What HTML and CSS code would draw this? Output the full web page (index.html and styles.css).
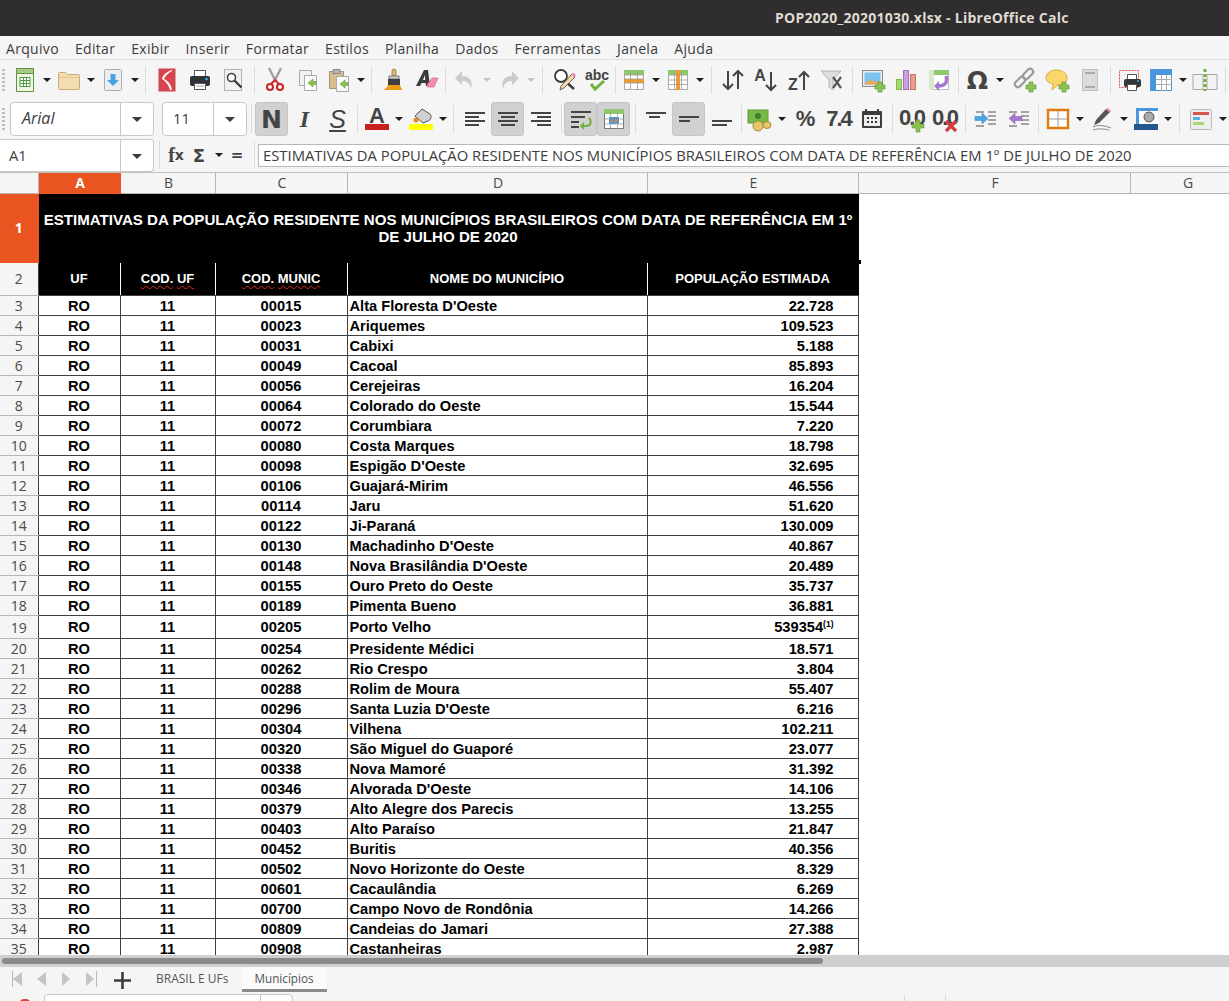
FILE: index.html
```html
<!DOCTYPE html>
<html lang="pt-BR">
<head>
<meta charset="utf-8">
<title>POP2020_20201030.xlsx - LibreOffice Calc</title>
<link rel="stylesheet" href="styles.css">
</head>
<body>
<header class="titlebar">POP2020_20201030.xlsx - LibreOffice Calc</header>
<nav class="menubar"><span>Arquivo</span><span>Editar</span><span>Exibir</span><span>Inserir</span><span>Formatar</span><span>Estilos</span><span>Planilha</span><span>Dados</span><span>Ferramentas</span><span>Janela</span><span>Ajuda</span></nav>

<div class="toolbar tb1">
<i class="grip"></i>
<span class="btn"><svg viewBox="0 0 24 24"><path d="M3.500.5h17v23h-17z" fill="#f0f4e6" stroke="#5f9440"/><path d="M3.500.5h17v5h-17z" fill="#a6c98a" stroke="#5f9440"/><path d="M7 9.500h10v9H7z" fill="#fff" stroke="#4f9a45"/><path d="M7 12.500h10M7 15.500h10M10.500 9.500v9M13.500 9.500v9" stroke="#4f9a45"/></svg></span><i class="arr"></i>
<span class="btn"><svg viewBox="0 0 24 24"><path d="M1.500 5.500a1 1 0 0 1 1-1h6l2 2h11a1 1 0 0 1 1 1v13a1 1 0 0 1-1 1h-19a1 1 0 0 1-1-1z" fill="#f3dcb0" stroke="#c9ab78"/><path d="M1.500 9.500h21" stroke="#e3c793"/></svg></span><i class="arr"></i>
<span class="btn"><svg viewBox="0 0 24 24"><rect x="3.500" y="1.500" width="17" height="21" rx="1" fill="#eceff2" stroke="#adadad"/><path d="M9.500 6h5v6H18l-6 6-6-6h3.500z" fill="#4ba3e3"/></svg></span><i class="arr"></i>
<i class="sep w10"></i>
<span class="btn"><svg viewBox="0 0 24 24"><rect x="4" y="1" width="16" height="22" fill="#d8434f" stroke="#c94a50"/><path d="M17 2c-6 2-9 5-10 9 3 2 7 6 8 11h2c-1-6-4-9-8-11 1-3 4-6 8-8z" fill="#fff"/></svg></span>
<span class="btn"><svg viewBox="0 0 24 24"><path d="M6.500 2.500h11v6h-11z" fill="#fff" stroke="#555"/><rect x="2" y="8" width="20" height="10" rx="2" fill="#2f3338"/><circle cx="18.500" cy="11" r="1.300" fill="#35b5e5"/><path d="M6.500 15.500h11v6h-11z" fill="#fff" stroke="#555"/><path d="M8 18h8" stroke="#aaa"/></svg></span>
<span class="btn"><svg viewBox="0 0 24 24"><rect x="3.500" y="1.500" width="17" height="21" fill="#f1f1f1" stroke="#b2b2b2"/><circle cx="10.500" cy="9.500" r="4" fill="#fff" stroke="#444" stroke-width="1.600"/><path d="M13.500 12.500l7 7" stroke="#333" stroke-width="2.200"/></svg></span>
<i class="sep w9"></i>
<span class="btn"><svg viewBox="0 0 24 24"><path d="M6 0l7 14M18 0l-7 14" stroke="#a0a0a0" stroke-width="2.400"/><circle cx="7" cy="19" r="3" fill="#fff" stroke="#c92a2a" stroke-width="2.200"/><circle cx="17" cy="19" r="3" fill="#fff" stroke="#c92a2a" stroke-width="2.200"/><path d="M8 16l4-4 4 4" fill="none" stroke="#c92a2a" stroke-width="2"/></svg></span>
<span class="btn"><svg viewBox="0 0 24 24"><path d="M3.500 2.500h12v15h-12z" fill="#f1f1f1" stroke="#aaa"/><path d="M8.500 7.500h12v15h-12z" fill="#fafafa" stroke="#aaa"/><path d="M17 11l-5 4 5 4v-2.500h3v-3h-3z" fill="#8cc152" stroke="#5f9c3a" stroke-width=".6"/></svg></span>
<span class="btn tight"><svg viewBox="0 0 24 24"><path d="M2.500 3.500h14v17h-14z" fill="#d8bd8e" stroke="#a8946f"/><path d="M6 1.500h7v4H6z" fill="#b5b5b5" stroke="#888"/><path d="M9.500 8.500h12v15h-12z" fill="#fafafa" stroke="#aaa"/><path d="M18 12l-5 4 5 4v-2.500h3v-3h-3z" fill="#8cc152" stroke="#5f9c3a" stroke-width=".6"/></svg></span><i class="arr"></i>
<i class="sep w10"></i>
<span class="btn"><svg viewBox="0 0 24 24"><path d="M13 1a2 2 0 0 1 2 2v5h-4V3a2 2 0 0 1 2-2z" fill="#d9b67a" stroke="#a5874f"/><path d="M8 8h10v3H8z" fill="#d0d0d0" stroke="#777"/><path d="M7 11h12v6H7z" fill="#3f3f3f"/><path d="M7 17h12c1 3 2 5 3 5H2c3-1 4-3 5-5z" fill="#f09a1a"/></svg></span>
<span class="btn"><svg viewBox="0 0 24 24"><path d="M2 18L10 2h4l2 16h-4l-.4-3H7.600L6 18zM9 12h2.300l-.5-5z" fill="#3b3b3b"/><path d="M13 17l5-7h6l-4 9h-7z" fill="#f28bb0" stroke="#d86b94" stroke-width=".7"/></svg></span>
<i class="sep w6"></i>
<span class="btn"><svg viewBox="0 0 24 24"><path d="M9 3L2 10l7 7v-4c5 0 8 2 9 8 2-8-1-13-9-13z" fill="#cbcbcb"/></svg></span><i class="arr off"></i>
<span class="btn"><svg viewBox="0 0 24 24"><path d="M15 3l7 7-7 7v-4c-5 0-8 2-9 8-2-8 1-13 9-13z" fill="#cbcbcb"/></svg></span><i class="arr off"></i>
<i class="sep w11"></i>
<span class="btn"><svg viewBox="0 0 24 24"><circle cx="9" cy="8" r="6" fill="#fff" stroke="#3c3c3c" stroke-width="1.800"/><path d="M13 13l9 8" stroke="#3c3c3c" stroke-width="2.400"/><path d="M20 6l3 3-11 11-4 2 1-4z" fill="#f3d9a6" stroke="#444" stroke-width=".8"/><path d="M19.500 6.500l2-2 2.500 2.500-2 2z" fill="#ec88b0"/></svg></span>
<span class="btn"><svg viewBox="0 0 24 24"><text x="12" y="12" class="abc">abc</text><path d="M6 16l4 5 9-8" fill="none" stroke="#6fb240" stroke-width="3"/></svg></span>
<i class="sep w4"></i>
<span class="btn"><svg viewBox="0 0 24 24"><path d="M2.500 2.500h19v19h-19z" fill="#fff" stroke="#aaa"/><path d="M2 2h20v5H2z" fill="#8dc96a"/><path d="M2 11h20v4H2z" fill="#f39c2c"/><path d="M2.500 11h19M2.500 15h19M2.500 7h19M8.500 2.500v19M15.500 2.500v19" stroke="#999" stroke-width=".8"/></svg></span><i class="arr"></i>
<span class="btn"><svg viewBox="0 0 24 24"><path d="M2.500 2.500h19v19h-19z" fill="#fff" stroke="#aaa"/><path d="M2 2h20v5H2z" fill="#8dc96a"/><path d="M10 2h4v20h-4z" fill="#f39c2c"/><path d="M2.500 12h19M2.500 16.500h19M2.500 7h19M8.500 2.500v19M15.500 2.500v19" stroke="#999" stroke-width=".8"/></svg></span><i class="arr"></i>
<i class="sep w11"></i>
<span class="btn"><svg viewBox="0 0 24 24"><path d="M7 3v18M2 16l5 5 5-5M17 21V3M12 8l5-5 5 5" fill="none" stroke="#444" stroke-width="2"/></svg></span>
<span class="btn"><svg viewBox="0 0 24 24"><text x="6" y="13" class="sorttxt">A</text><path d="M17 4v18M12 17l5 5 5-5" fill="none" stroke="#444" stroke-width="2"/></svg></span>
<span class="btn"><svg viewBox="0 0 24 24"><text x="6" y="22" class="sorttxt">Z</text><path d="M17 22V4M12 9l5-5 5 5" fill="none" stroke="#444" stroke-width="2"/></svg></span>
<span class="btn"><svg viewBox="0 0 24 24"><path d="M1 3h20l-8 9v10l-4-3v-7z" fill="#ddd" stroke="#b5b5b5"/><path d="M13 9l8 11M21 9l-8 11" stroke="#555" stroke-width="2.200"/></svg></span>
<i class="sep w8"></i>
<span class="btn"><svg viewBox="0 0 24 24"><rect x="1.500" y="2.500" width="20" height="16" fill="#eee" stroke="#888"/><rect x="3.500" y="4.500" width="16" height="12" fill="#7cc3ee"/><path d="M3.500 16.500l5-5 4 3 3-2 4 4z" fill="#f1a24c"/><path d="M14 17h3v-3h4v3h3v4h-3v3h-4v-3h-3z" fill="#8cc152" stroke="#5f9c3a" stroke-width=".7"/></svg></span>
<span class="btn"><svg viewBox="0 0 24 24"><rect x="2.500" y="11.500" width="5" height="10" fill="#a9d671" stroke="#85b750"/><rect x="9.500" y="2.500" width="5" height="19" fill="#c8a0e0" stroke="#9f74bd"/><rect x="16.500" y="6.500" width="5" height="15" fill="#ec9c8c" stroke="#c87566"/></svg></span>
<span class="btn"><svg viewBox="0 0 24 24"><path d="M2.500 2.500h19v19h-19z" fill="#fff" stroke="#bbb"/><path d="M2 2h20v5H2z" fill="#8dc96a"/><path d="M2 2h5v20H2z" fill="#d9e8c8"/><path d="M19 8c2 6-1 10-7 10" fill="none" stroke="#a678d0" stroke-width="3.500"/><path d="M12 13l-5 5 5 5z" fill="#a678d0"/></svg></span>
<i class="sep w6"></i>
<span class="btn glyph omega">Ω</span><i class="arr"></i>
<i class="sep w2"></i>
<span class="btn"><svg viewBox="0 0 24 24"><rect x="13" y="0" width="6" height="12" rx="3" transform="rotate(45 16 6)" fill="none" stroke="#9a9a9a" stroke-width="2.200"/><rect x="5" y="8" width="6" height="12" rx="3" transform="rotate(45 8 14)" fill="none" stroke="#9a9a9a" stroke-width="2.200"/><path d="M14 17h3v-3h4v3h3v4h-3v3h-4v-3h-3z" fill="#8cc152" stroke="#5f9c3a" stroke-width=".7"/></svg></span>
<span class="btn"><svg viewBox="0 0 24 24"><path d="M11 2c6 0 11 3 11 8s-4 7-9 7l-6 5 1-6c-4-1-7-3-7-6 0-5 5-8 10-8z" fill="#fbd66a" stroke="#dcae3c"/><path d="M14 17h3v-3h4v3h3v4h-3v3h-4v-3h-3z" fill="#8cc152" stroke="#5f9c3a" stroke-width=".7"/></svg></span>
<span class="btn"><svg viewBox="0 0 24 24"><rect x="4.500" y="1.500" width="15" height="21" fill="#dcdcdc" stroke="#c0c0c0"/><path d="M7 5h10M7 19h10" stroke="#aaa" stroke-width="2"/></svg></span>
<i class="sep w7"></i>
<span class="btn"><svg viewBox="0 0 24 24"><path d="M1.500 2.500h19v17h-19z" fill="#f3f3f3" stroke="#d9534f" stroke-dasharray="2 1"/><path d="M9.500 6.500h9v5h-9z" fill="#fff" stroke="#555"/><rect x="6" y="11" width="17" height="8" rx="2" fill="#33373c"/><circle cx="20" cy="13" r="1" fill="#35b5e5"/><path d="M9.500 16.500h9v6h-9z" fill="#fff" stroke="#555"/></svg></span>
<span class="btn tight"><svg viewBox="0 0 24 24"><path d="M1.500 1.500h21v21h-21z" fill="#fff" stroke="#5b8ecb"/><path d="M1 1h22v6H1z" fill="#4b95dd"/><path d="M1 1h6v22H1z" fill="#4b95dd"/><path d="M7 11.500h16M7 16.500h16M12.500 7v16M17.500 7v16" stroke="#aaa"/></svg></span><i class="arr"></i>
<span class="btn"><svg viewBox="0 0 24 24"><path d="M0 6.500h10v15H0zM14 6.500h10v15H14z" fill="#f3f3f3" stroke="#a8a8a8"/><path d="M12 1v3M12 6v3M12 11v3M12 16v3M12 21v2" stroke="#6eb03c" stroke-width="3"/></svg></span>
<i class="sep w7"></i>
</div>

<div class="toolbar tb2">
<i class="grip"></i>
<div class="combo fontname"><span class="val">Arial</span><b class="drop"></b></div>
<div class="combo fontsize"><span class="val">11</span><b class="drop"></b></div>
<i class="sep w8"></i>
<span class="btn on glyph bold">N</span>
<span class="btn glyph ital">I</span>
<span class="btn glyph shad">S</span>
<i class="sep w6"></i>
<span class="btn"><svg viewBox="0 0 24 24"><text x="12" y="16" class="colorA">A</text><rect y="17" width="24" height="6" fill="#c9211e"/></svg></span><i class="arr"></i>
<span class="btn"><svg viewBox="0 0 24 24"><path d="M6 9l7-7 8 5c2 2 1 6-2 7l-5 2z" fill="#d0d0d0" stroke="#555"/><circle cx="7" cy="13" r="2.500" fill="#f2841e"/><rect y="17" width="24" height="6" fill="#ffff00"/></svg></span><i class="arr"></i>
<i class="sep w10"></i>
<span class="btn"><svg viewBox="0 0 24 24"><path d="M2 6h20M2 10h14M2 14h20M2 18h14" stroke="#444" stroke-width="2"/></svg></span>
<span class="btn on"><svg viewBox="0 0 24 24"><path d="M2 6h20M5 10h14M2 14h20M5 18h14" stroke="#444" stroke-width="2"/></svg></span>
<span class="btn"><svg viewBox="0 0 24 24"><path d="M2 6h20M8 10h14M2 14h20M8 18h14" stroke="#444" stroke-width="2"/></svg></span>
<i class="sep w7"></i>
<span class="btn on"><svg viewBox="0 0 24 24"><path d="M2 5h20M2 10h14M2 15h8M2 20h8" stroke="#444" stroke-width="2"/><path d="M20 11c3 3 2 8-3 8h-3" fill="none" stroke="#6fb240" stroke-width="2"/><path d="M15 15l-4 4 4 4z" fill="#6fb240"/></svg></span>
<span class="btn on"><svg viewBox="0 0 24 24"><path d="M2.500 2.500h19v19h-19z" fill="#fff" stroke="#777"/><path d="M2 2h20v5H2z" fill="#8dc96a"/><path d="M7 10h10v7H7z" fill="#4b95dd"/><path d="M8 13.500l3-2.500v5zM16 13.500l-3-2.500v5z" fill="#f2841e"/><path d="M2.500 12h4M17.500 12h4M8.500 2.500v7M15.500 2.500v7M8.500 17.500v4M15.500 17.500v4M2.500 17h19" stroke="#999" stroke-width=".8"/></svg></span>
<i class="sep w9"></i>
<span class="btn"><svg viewBox="0 0 24 24"><path d="M2 6h20M5 10h11" stroke="#444" stroke-width="2"/></svg></span>
<span class="btn on"><svg viewBox="0 0 24 24"><path d="M2 10h20M2 14h11" stroke="#444" stroke-width="2"/></svg></span>
<span class="btn"><svg viewBox="0 0 24 24"><path d="M2 14h20M2 18h15" stroke="#444" stroke-width="2"/></svg></span>
<i class="sep w5"></i>
<span class="btn"><svg viewBox="0 0 24 24"><rect x="0" y="3" width="20" height="13" fill="#76b947" stroke="#5f9c3a"/><circle cx="10" cy="9" r="3" fill="#3f7d2a"/><ellipse cx="10" cy="19" rx="5" ry="5" fill="#e6c76a" stroke="#a8883a"/><ellipse cx="19" cy="18" rx="4" ry="3.500" fill="#e6c76a" stroke="#a8883a"/></svg></span><i class="arr"></i>
<i class="sep w2"></i>
<span class="btn glyph pct">%</span>
<span class="btn glyph num">7.4</span>
<span class="btn"><svg viewBox="0 0 24 24"><path d="M3 4h18a1 1 0 0 1 1 1v15a1 1 0 0 1-1 1H3a1 1 0 0 1-1-1V5a1 1 0 0 1 1-1z" fill="#3c3c3c"/><rect x="4" y="8" width="16" height="11" fill="#eee"/><path d="M6 2v3M18 2v3" stroke="#3c3c3c" stroke-width="2"/><path d="M7 11h2M11 11h2M15 11h2M7 15h2M11 15h2M15 15h2" stroke="#3c3c3c" stroke-width="2"/></svg></span>
<i class="sep w7"></i>
<span class="btn"><span class="glyph dec">0.0</span><svg class="mini" viewBox="0 0 12 12"><path d="M4 0h4v4h4v4H8v4H4V8H0V4h4z" fill="#8cc152" stroke="#5f9c3a" stroke-width=".6"/></svg></span>
<span class="btn"><span class="glyph dec">0.0</span><svg class="mini" viewBox="0 0 12 12"><path d="M1 1l10 10M11 1L1 11" stroke="#d33f3f" stroke-width="3.200"/></svg></span>
<i class="sep w8"></i>
<span class="btn"><svg viewBox="0 0 24 24"><path d="M14 5h8M14 9h8M14 13h8M14 17h8M2 5h8M2 19h8" stroke="#888" stroke-width="1.500"/><path d="M1 9.500h7V6l6 5.500-6 5.500v-3.500H1z" fill="#4ba3e3" stroke="#2f85c4" stroke-width=".5"/></svg></span>
<span class="btn"><svg viewBox="0 0 24 24"><path d="M14 5h8M14 9h8M14 13h8M14 17h8M2 5h8M2 19h8" stroke="#888" stroke-width="1.500"/><path d="M15 9.500H8V6l-6 5.500L8 17v-3.500h7z" fill="#a678d0" stroke="#8657b0" stroke-width=".5"/></svg></span>
<i class="sep w6"></i>
<span class="btn"><svg viewBox="0 0 24 24"><path d="M2 3h20v18H2z" fill="#fff" stroke="#e07b10" stroke-width="2.400"/><path d="M12 4v16M3 12h18" stroke="#999"/></svg></span><i class="arr"></i>
<span class="btn"><svg viewBox="0 0 24 24"><path d="M16 2l4 3L9 16l-5 2 2-5z" fill="#555"/><path d="M16 2l2-1 3 3-1 2z" fill="#ec88b0"/><path d="M3 20c6-3 12-1 18 1M3 23c6-2 11-1 16 0" stroke="#888" fill="none"/></svg></span><i class="arr"></i>
<span class="btn"><svg viewBox="0 0 24 24"><path d="M2 1h22v3H2zM2 4h3v13H2z" fill="#4b95dd"/><rect x="5" y="4" width="19" height="13" fill="#fff"/><circle cx="15" cy="10" r="5" fill="#aaa" stroke="#555"/><rect y="17" width="24" height="6" fill="#23588e"/></svg></span><i class="arr"></i>
<i class="sep w11"></i>
<span class="btn condb"><svg viewBox="0 0 24 24"><rect x="1.500" y="2.500" width="21" height="20" rx="1" fill="#eee" stroke="#bbb"/><path d="M4 5h16v3H4z" fill="#d9534f"/><path d="M4 10h7v3H4z" fill="#5ab0e8"/><path d="M4 15h11v3H4z" fill="#a9d671"/></svg></span><i class="arr"></i>
</div>

<div class="formulabar">
<div class="combo namebox"><span class="val">A1</span><b class="drop"></b></div>
<i class="sep w10"></i>
<span class="fbtn glyph fx">f<small>x</small></span>
<span class="fbtn glyph sigma">Σ</span><i class="arr"></i>
<span class="fbtn glyph equal">=</span>
<i class="sep w8"></i>
<div class="finput">ESTIMATIVAS DA POPULAÇÃO RESIDENTE NOS MUNICÍPIOS BRASILEIROS COM DATA DE REFERÊNCIA EM 1º DE JULHO DE 2020</div>
</div>

<main class="sheet">
<table class="grid">
<colgroup><col class="c0"><col class="c1"><col class="c2"><col class="c3"><col class="c4"><col class="c5"><col class="c6"><col class="c7"></colgroup>
<thead><tr class="colhead"><th class="sel"></th><th class="sel">A</th><th>B</th><th>C</th><th>D</th><th>E</th><th>F</th><th>G</th></tr></thead>
<tbody>
<tr class="r1"><th class="sel">1</th><td colspan="5" class="title">ESTIMATIVAS DA POPULAÇÃO RESIDENTE NOS MUNICÍPIOS BRASILEIROS COM DATA DE REFERÊNCIA EM 1º DE JULHO DE 2020</td></tr>
<tr class="r2"><th>2</th><td>UF</td><td><u>COD.</u> <u>UF</u></td><td><u>COD.</u> <u>MUNIC</u></td><td>NOME DO MUNICÍPIO</td><td class="popcol">POPULAÇÃO ESTIMADA</td></tr>
<tr><th>3</th><td>RO</td><td>11</td><td>00015</td><td>Alta Floresta D'Oeste</td><td>22.728</td></tr>
<tr><th>4</th><td>RO</td><td>11</td><td>00023</td><td>Ariquemes</td><td>109.523</td></tr>
<tr><th>5</th><td>RO</td><td>11</td><td>00031</td><td>Cabixi</td><td>5.188</td></tr>
<tr><th>6</th><td>RO</td><td>11</td><td>00049</td><td>Cacoal</td><td>85.893</td></tr>
<tr><th>7</th><td>RO</td><td>11</td><td>00056</td><td>Cerejeiras</td><td>16.204</td></tr>
<tr><th>8</th><td>RO</td><td>11</td><td>00064</td><td>Colorado do Oeste</td><td>15.544</td></tr>
<tr><th>9</th><td>RO</td><td>11</td><td>00072</td><td>Corumbiara</td><td>7.220</td></tr>
<tr><th>10</th><td>RO</td><td>11</td><td>00080</td><td>Costa Marques</td><td>18.798</td></tr>
<tr><th>11</th><td>RO</td><td>11</td><td>00098</td><td>Espigão D'Oeste</td><td>32.695</td></tr>
<tr><th>12</th><td>RO</td><td>11</td><td>00106</td><td>Guajará-Mirim</td><td>46.556</td></tr>
<tr><th>13</th><td>RO</td><td>11</td><td>00114</td><td>Jaru</td><td>51.620</td></tr>
<tr><th>14</th><td>RO</td><td>11</td><td>00122</td><td>Ji-Paraná</td><td>130.009</td></tr>
<tr><th>15</th><td>RO</td><td>11</td><td>00130</td><td>Machadinho D'Oeste</td><td>40.867</td></tr>
<tr><th>16</th><td>RO</td><td>11</td><td>00148</td><td>Nova Brasilândia D'Oeste</td><td>20.489</td></tr>
<tr><th>17</th><td>RO</td><td>11</td><td>00155</td><td>Ouro Preto do Oeste</td><td>35.737</td></tr>
<tr><th>18</th><td>RO</td><td>11</td><td>00189</td><td>Pimenta Bueno</td><td>36.881</td></tr>
<tr class="r19"><th>19</th><td>RO</td><td>11</td><td>00205</td><td>Porto Velho</td><td>539354<sup>(1)</sup></td></tr>
<tr><th>20</th><td>RO</td><td>11</td><td>00254</td><td>Presidente Médici</td><td>18.571</td></tr>
<tr><th>21</th><td>RO</td><td>11</td><td>00262</td><td>Rio Crespo</td><td>3.804</td></tr>
<tr><th>22</th><td>RO</td><td>11</td><td>00288</td><td>Rolim de Moura</td><td>55.407</td></tr>
<tr><th>23</th><td>RO</td><td>11</td><td>00296</td><td>Santa Luzia D'Oeste</td><td>6.216</td></tr>
<tr><th>24</th><td>RO</td><td>11</td><td>00304</td><td>Vilhena</td><td>102.211</td></tr>
<tr><th>25</th><td>RO</td><td>11</td><td>00320</td><td>São Miguel do Guaporé</td><td>23.077</td></tr>
<tr><th>26</th><td>RO</td><td>11</td><td>00338</td><td>Nova Mamoré</td><td>31.392</td></tr>
<tr><th>27</th><td>RO</td><td>11</td><td>00346</td><td>Alvorada D'Oeste</td><td>14.106</td></tr>
<tr><th>28</th><td>RO</td><td>11</td><td>00379</td><td>Alto Alegre dos Parecis</td><td>13.255</td></tr>
<tr><th>29</th><td>RO</td><td>11</td><td>00403</td><td>Alto Paraíso</td><td>21.847</td></tr>
<tr><th>30</th><td>RO</td><td>11</td><td>00452</td><td>Buritis</td><td>40.356</td></tr>
<tr><th>31</th><td>RO</td><td>11</td><td>00502</td><td>Novo Horizonte do Oeste</td><td>8.329</td></tr>
<tr><th>32</th><td>RO</td><td>11</td><td>00601</td><td>Cacaulândia</td><td>6.269</td></tr>
<tr><th>33</th><td>RO</td><td>11</td><td>00700</td><td>Campo Novo de Rondônia</td><td>14.266</td></tr>
<tr><th>34</th><td>RO</td><td>11</td><td>00809</td><td>Candeias do Jamari</td><td>27.388</td></tr>
<tr><th>35</th><td>RO</td><td>11</td><td>00908</td><td>Castanheiras</td><td>2.987</td></tr>
</tbody>
</table>
<i class="handle"></i>
</main>

<div class="hscroll"><i class="thumb"></i></div>
<div class="tabbar">
<svg class="tabnav" viewBox="0 0 86 16"><path d="M.500 0v16M84.500 0v16" stroke="#b8b8b8"/><path d="M1 8l9-7v14zM25 8l9-7v14zM58 8l-8-7v14zM74 1l8 7-8 7z" fill="#c4c4c4"/></svg>
<svg class="tabadd" viewBox="0 0 17 17"><path d="M8.500 0v17M0 8.500h17" stroke="#3c3c3c" stroke-width="2.600"/></svg>
<span class="tab">BRASIL E UFs</span>
<span class="tab active">Municípios</span>
</div>
<footer class="statusbar">
<i class="rec"></i>
<div class="stbox"><i class="stdiv"></i></div>
<i class="stsep first"></i><i class="stsep"></i>
</footer>
</body>
</html>
```
FILE: styles.css
```css
* { box-sizing: border-box; }
html, body { margin: 0; height: 1001px; overflow: hidden; }
body { width: 1229px; background: #f5f5f5; font-family: "Open Sans", "Noto Sans", sans-serif; color: #3c3c3c; display: flex; flex-direction: column; }

.titlebar { flex: 0 0 36px; background: #2f2d2d; color: #dfdbd2; font: bold 14px/36px "Open Sans", sans-serif; padding-left: 775px; letter-spacing: .25px; white-space: nowrap; }
.menubar { flex: 0 0 24px; min-height: 0; overflow: hidden; display: flex; gap: 16px; padding-left: 6px; font-size: 14px; letter-spacing: .32px; line-height: 25px; border-bottom: 1px solid #e0e0e0; color: #3c3c3c; }

.toolbar { display: flex; align-items: center; position: relative; min-height: 0; }
.tb1 { flex: 0 0 40px; }
.tb2 { flex: 0 0 38px; }
.grip { flex: 0 0 8px; align-self: center; height: 22px; margin-left: 0; background: repeating-linear-gradient(to bottom, #bdbdbd 0 2px, transparent 2px 4px) 2px 0 / 3px 100% no-repeat; }
.btn { flex: 0 0 33px; height: 34px; display: flex; align-items: center; justify-content: center; position: relative; }
.btn > svg { width: 24px; height: 24px; display: block; overflow: visible; }
.btn.on { background: #d1d1d1; border-radius: 4px; box-shadow: inset 0 0 0 1px #c6c6c6; }
.tight { margin-left: -2px; }
.arr { flex: 0 0 11px; height: 6px; position: relative; }
.arr::before { content: ""; position: absolute; left: 2px; top: 1px; border: 4px solid transparent; border-top: 4px solid #1e1e1e; border-bottom: 0; }
.arr.off::before { border-top-color: #c4c4c4; }
.sep { height: 28px; position: relative; display: block; }
.sep::before { content: ""; position: absolute; left: 50%; top: 0; bottom: 0; width: 1px; background: #dcdcdc; }
.w2 { flex: 0 0 2px; } .w2::before { display: none; }
.w4 { flex: 0 0 4px; } .w5 { flex: 0 0 5px; } .w6 { flex: 0 0 6px; } .w7 { flex: 0 0 7px; }
.w8 { flex: 0 0 8px; } .w9 { flex: 0 0 9px; } .w10 { flex: 0 0 10px; } .w11 { flex: 0 0 11px; }

.combo { display: flex; height: 34px; background: #fff; border: 1px solid #c8c8c8; border-radius: 4px; align-items: center; }
.val { flex: 1; font-size: 14.800px; color: #3c3c3c; padding: 0 0 2px 10px; }
.drop { flex: 0 0 33px; height: 100%; border-left: 1px solid #c8c8c8; position: relative; }
.drop::before { content: ""; position: absolute; left: 11px; top: 14px; border: 5px solid transparent; border-top: 5px solid #3c3c3c; border-bottom: 0; }
.fontname { flex: 0 0 144px; margin-left: 2px; }
.fontname .val { font-style: italic; font-size: 16px; padding-left: 11px; }
.fontsize { flex: 0 0 85px; margin-left: 8px; margin-right: 0; }

.glyph { font-family: "Liberation Sans", sans-serif; color: #444; }
.bold { font: 900 25px "DejaVu Sans", sans-serif; color: #444; }
.ital { font: italic 700 24px "Liberation Serif", serif; }
.shad { font: italic 400 25px "Liberation Sans", sans-serif; text-decoration: underline; text-decoration-thickness: 2px; text-underline-offset: 2px; }
.omega { font: 700 25px "DejaVu Sans", sans-serif; }
.pct { font-weight: 700; font-size: 22px; }
.num { font-weight: 700; font-size: 22px; letter-spacing: -2px; }
.dec { font-size: 22px; letter-spacing: -1.800px; font-weight: 700; margin-bottom: 3px; }
.btn > svg.mini { position: absolute; width: 12px; height: 12px; right: 4px; bottom: 4px; }
.abc { font: 700 14px "Liberation Sans", sans-serif; fill: #444; text-anchor: middle; }
.sorttxt { font: 700 16px "Liberation Sans", sans-serif; fill: #444; text-anchor: middle; }
.colorA { font: 700 22px "Liberation Sans", sans-serif; fill: #444; text-anchor: middle; }
.condb { margin-left: 0; }

.formulabar { flex: 0 0 35px; display: flex; align-items: center; border-bottom: 1px solid #c2c2c2; min-height: 0; }
.namebox { flex: 0 0 155px; height: 33px; margin-left: -1px; border-left: 0; border-radius: 0 4px 4px 0; }
.namebox .val { padding: 0 0 0 10px; }
.fbtn { display: flex; align-items: center; justify-content: center; flex: 0 0 30px; height: 30px; }
.fx { font: 700 20px "Liberation Serif", serif; flex: 0 0 26px; margin-left: -1px; }
.fx small { font: 700 14px "DejaVu Sans", sans-serif; }
.sigma { font: 700 18px "DejaVu Sans", sans-serif; flex: 0 0 22px; margin-left: -1px; margin-right: 3px; }
.equal { font: 700 15px "DejaVu Sans", sans-serif; flex: 0 0 26px; margin-left: 0; }
.finput { flex: 1; height: 23px; margin-left: 0; background: #fff; border: 1px solid #b8b8b8; border-right: 0; font-size: 14.820px; line-height: 21px; padding-left: 4px; white-space: nowrap; color: #3c3c3c; overflow: hidden; }

.sheet { flex: 0 0 782px; background: #fff; overflow: hidden; position: relative; }
.grid { table-layout: fixed; border-collapse: collapse; width: 1244px; font: 700 14.670px/16px "Liberation Sans", sans-serif; color: #000; }
.c0 { width: 38px; } .c1 { width: 82px; } .c2 { width: 95px; } .c3 { width: 132px; } .c4 { width: 300px; } .c5 { width: 211px; } .c6 { width: 272px; } .c7 { width: 114px; }
.grid th, .grid td { padding: 0; }
.grid tbody tr { height: 20px; }
.grid tbody th { background: #f5f5f5; color: #4a4a4a; font: 400 14px/16px "Open Sans", sans-serif; border: 1px solid #b5b5b5; border-left: 0; border-right-color: #3f3f3f; text-align: center; padding-top: 2px; }
.grid tbody td { border: 1px solid #3f3f3f; text-align: center; padding-top: 1px; white-space: nowrap; }
.grid tbody td:nth-of-type(4) { text-align: left; padding-left: 2px; }
.grid tbody td:nth-of-type(5) { text-align: right; padding-right: 24px; }
.colhead { height: 20px; }
.colhead th { background: #f5f5f5; color: #4a4a4a; font: 400 14px/16px "Open Sans", sans-serif; border: 1px solid #b5b5b5; border-top: 0; padding-left: 2px; }
.colhead th:first-child { border-left: 0; }
.grid th.sel { background: #e95420; color: #fff; font-weight: 700; border-color: #e95420; }
.colhead th.sel:first-child { background: #f5f5f5; border-color: #b5b5b5; }
.grid .r1 { height: 69px; }
.grid .r1 th { padding-top: 0; }
.grid .r1 td.title { background: #000; color: #fff; font-size: 15.100px; line-height: 17px; text-align: center; white-space: normal; padding: 0 1px; border-color: #000; }
.grid .r2 { height: 33px; }
.grid .r2 th { padding-top: 0; }
.grid .r2 td { background: #000; color: #fff; font-size: 13px; border-color: #000; border-left-color: #fff; border-right-color: #fff; border-bottom-color: #3f3f3f; padding: 1px 0 0; }
.grid .r2 td:nth-of-type(4) { text-align: center; padding-left: 0; }
.grid .r2 td:nth-of-type(5) { text-align: center; padding-right: 0; border-right-color: #000; }
.grid .r2 u { text-decoration: underline wavy #e0261c 1px; text-underline-offset: 2px; }
.grid .r19 { height: 23px; }
.grid sup { font-size: 8.500px; line-height: 0; vertical-align: 5px; }
.handle { position: absolute; left: 857px; top: 87px; width: 4px; height: 4px; background: #000; }

.hscroll { flex: 0 0 12px; background: #cfcfcf; padding: 3px 0 0 2px; }
.thumb { display: block; width: 821px; height: 6px; background: #8a8a8a; border-radius: 3px; }
.tabbar { flex: 0 0 26px; display: flex; align-items: flex-start; font-size: 12px; }
.tabnav { width: 86px; height: 16px; margin: 4px 0 0 12px; flex: none; }
.tabadd { width: 17px; height: 17px; margin: 5px 0 0 16px; flex: none; }
.tab { height: 25px; padding: 0 13px; line-height: 24px; color: #555; flex: none; }
.tab:first-of-type { margin-left: 12px; }
.tab.active { background: #fafafa; border-bottom: 3px solid #8a8a8a; margin-left: 0; font-size: 11.700px; line-height: 22px; }
.statusbar { flex: 0 0 8px; position: relative; overflow: hidden; }
.rec { position: absolute; left: 20px; top: 6px; width: 10px; height: 4px; background: #d9433e; border-radius: 5px 5px 0 0; }
.stbox { position: absolute; left: 44px; top: 1px; width: 249px; height: 10px; background: #fff; border: 1px solid #c8c8c8; border-radius: 4px 4px 0 0; }
.stdiv { position: absolute; left: 215px; top: 0; bottom: 0; width: 1px; background: #c8c8c8; }
.stsep { position: absolute; left: 945px; top: 2px; height: 8px; width: 1px; background: #d8d8d8; }
.stsep.first { left: 904px; }
```
